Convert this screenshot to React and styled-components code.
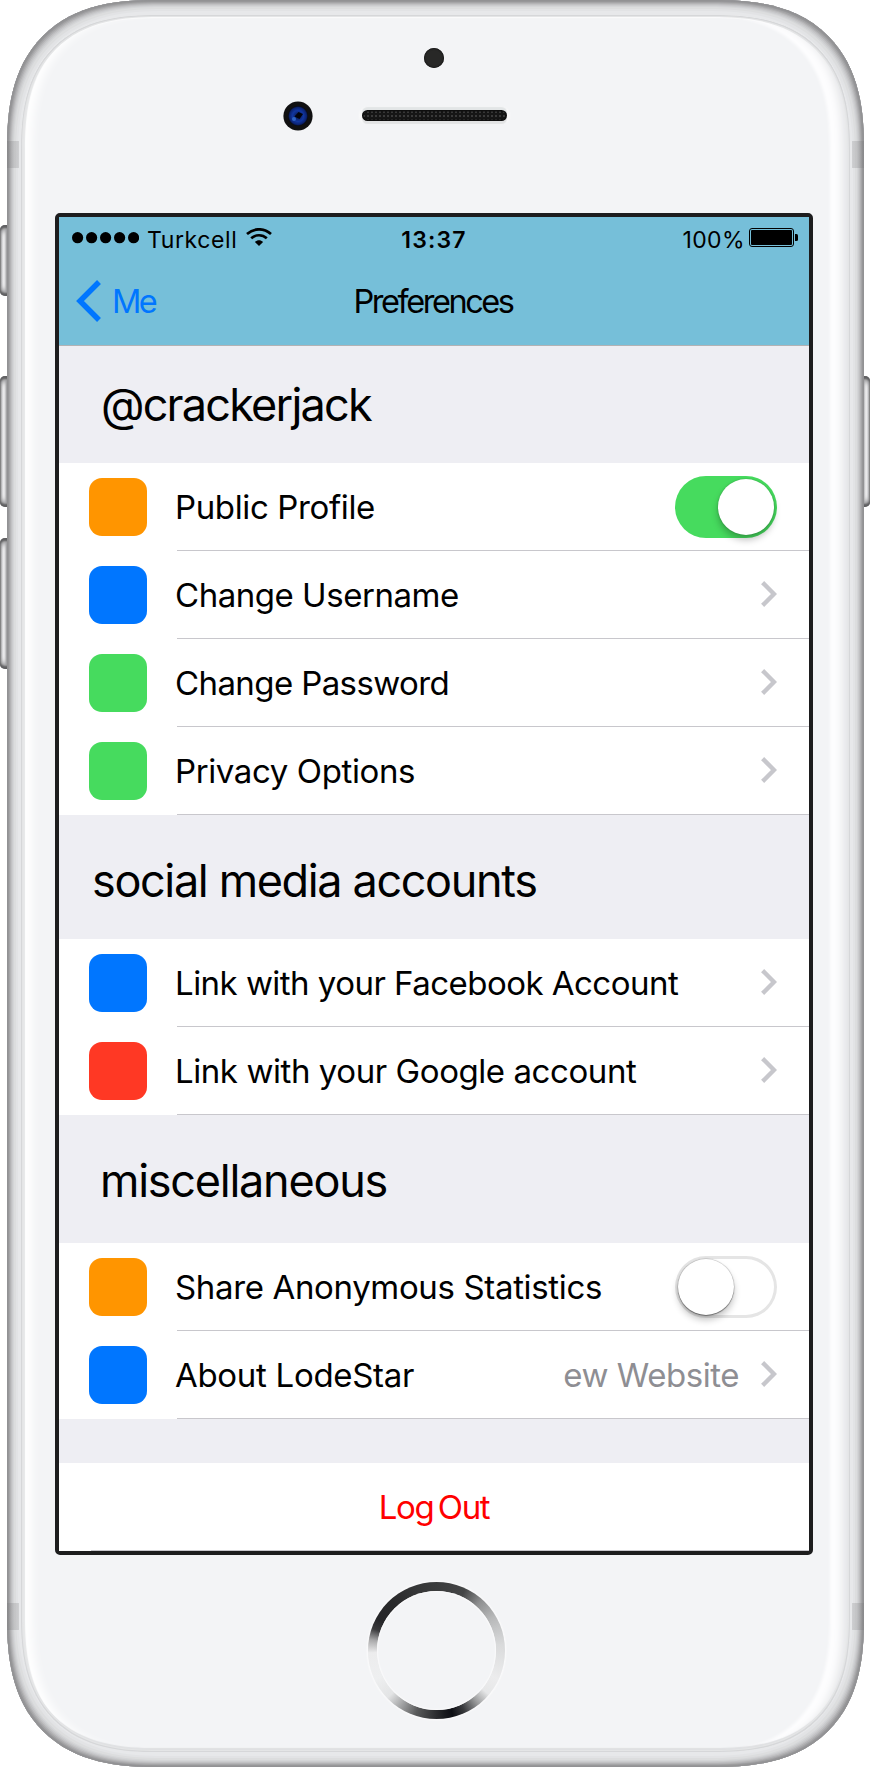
import React, { useState } from 'react';
import styled, { createGlobalStyle, css } from 'styled-components';

const GlobalStyle = createGlobalStyle`
  *, *::before, *::after { box-sizing: border-box; }
  html, body { margin: 0; padding: 0; background: #fff; }
  body { font-family: Inter, "Liberation Sans", sans-serif; color: #000; }
  button { font: inherit; color: inherit; border: 0; padding: 0; background: none; }
`;

/* ---------- Device ---------- */

const Device = styled.div`
  position: relative;
  width: 870px;
  height: 1767px;
  padding: 0 6px 0 7px;
  overflow: hidden;
`;

const SideButton = styled.span`
  position: absolute;
  top: ${(p) => p.$top}px;
  ${(p) => p.$side}: 0;
  width: 12px;
  height: ${(p) => p.$length}px;
  border-radius: 5px;
  background: linear-gradient(
    ${(p) => (p.$side === 'left' ? 'to right' : 'to left')},
    #8e8e90 0, #bcbcbe 1px, #e6e6e8 3px, #f0f0f1 4px, #b9b9bb 6px, #6a6a6c 8px
  );
  box-shadow: inset 0 3px 2px #5f5f61, inset 0 -3px 2px #5f5f61,
    inset 0 8px 5px -2px #a2a2a4, inset 0 -8px 5px -2px #a2a2a4;
`;

const Shell = styled.div`
  position: relative;
  height: 1767px;
  padding: 15px 14px;
  border-radius: 128px;
  background: #e7e8ea;
  box-shadow: inset 0 0 0 1px #929294, inset 0 0 0 2px #979799, inset 0 0 0 3px #a5a5a7,
    inset 0 0 0 4px #b3b3b5, inset 0 0 0 5px #c1c1c3, inset 0 0 0 6px #cbccce,
    inset 0 0 0 7px #d4d5d7, inset 0 0 0 9px #dcddde, inset 0 0 0 11px #e2e3e5;
  @supports (corner-shape: superellipse(1.3)) {
    border-radius: 150px;
    corner-shape: superellipse(1.34);
  }
`;

const AntennaBand = styled.span`
  position: absolute;
  top: ${(p) => p.$top}px;
  ${(p) => p.$side}: 0;
  width: 12px;
  height: 27px;
  background: linear-gradient(
    ${(p) => (p.$side === 'left' ? 'to right' : 'to left')},
    rgba(120, 120, 122, 0.3), rgba(150, 150, 152, 0.3)
  );
`;

const Face = styled.div`
  display: flex;
  flex-direction: column;
  height: 1737px;
  border-radius: 116px;
  background: #f3f4f6;
  box-shadow: inset 0 0 0 1px #d6d7d9, inset 0 0 0 2px #e4e5e6,
    inset 0 -4px 1px #dfe0e2,
    inset 5px 0 1px -1px #e6e7e8, inset 14px 0 10px -3px #ffffff,
    inset -13px 0 10px -6px #e2e3e5, inset -21px 0 3px -1px #fdfdfe,
    inset 0 3px 1px #fbfbfc;
  @supports (corner-shape: superellipse(1.3)) {
    border-radius: 136px;
    corner-shape: superellipse(1.34);
  }
`;

const SensorArea = styled.div`
  height: 198px;
  padding-top: 33px;
`;

const Proximity = styled.div`
  width: 20px;
  height: 20px;
  margin-left: 403px;
  border-radius: 50%;
  background: #282827;
  box-shadow: inset 0 0 1px 1px #1c1c1c;
`;

const SensorRow = styled.div`
  display: flex;
  height: 30px;
  margin: 33px 0 0 262px;
`;

const Camera = styled.svg`
  display: block;
  width: 30px;
  height: 30px;
`;

const Speaker = styled.div`
  width: 145px;
  height: 11px;
  margin: 9px 0 0 49px;
  border-radius: 6px;
  background: radial-gradient(circle, #3a3a3a 0.8px, transparent 1.1px) 0 0 / 4px 4px, #161616;
  box-shadow: inset 0 0 1px 1.5px #0e0e0e, 0 -3px 1px #e2e5e6, 0 3px 1px #e2e3e4, 0 0 2px 3px #fafafa;
`;

const HomeButton = styled.button`
  width: 137px;
  height: 137px;
  margin: 27px 0 0 347px;
  padding: 9px;
  border-radius: 50%;
  background: conic-gradient(
    #3b3c3d 0deg, #444546 25deg, #8f9091 42deg, #b8b9ba 60deg, #d9dadb 85deg, #ececed 115deg,
    #e6e7e8 130deg, #9b9c9d 142deg, #3a3b3e 155deg, #0d0e14 166deg, #1a1b1f 173deg,
    #303133 182deg, #595a5b 198deg, #a9aaab 214deg, #e3e4e5 226deg, #eeeff0 245deg,
    #ececed 268deg, #aaaaab 279deg, #3a3a3c 289deg, #262629 298deg, #29292b 318deg, #353637 340deg,
    #3b3c3d 360deg
  );
  box-shadow: 0 0 1px 1.5px #f9f9fa;
  &::before {
    content: '';
    display: block;
    height: 100%;
    border-radius: 50%;
    background: #f3f4f6;
    box-shadow: inset 0 0 1px 1px #fafafb;
  }
`;

/* ---------- Screen ---------- */

const Screen = styled.main`
  display: flex;
  flex-direction: column;
  width: 758px;
  height: 1342px;
  margin-left: 34px;
  border: 4px solid #1d1d1e;
  border-radius: 5px;
  background: #eeeef3;
`;

const TopBar = styled.header`
  height: 129px;
  background: #76bfd9;
  border-bottom: 1px solid #b2b2b4;
`;

const StatusBar = styled.div`
  display: grid;
  grid-template-columns: 1fr auto 1fr;
  height: 40px;
  padding: 9px 11px 0 13px;
  font-size: 23px;
  line-height: 28px;
`;

const StatusGroup = styled.div`
  display: flex;
  justify-content: ${(p) => (p.$end ? 'flex-end' : 'flex-start')};
  letter-spacing: ${(p) => (p.$end ? 0.4 : 0.6)}px;
`;

const Clock = styled.time`
  margin-right: 2px;
  font-weight: 600;
  letter-spacing: 1.15px;
`;

const SignalDots = styled.svg`
  width: 67px;
  height: 12px;
  margin: 6px 8px 0 0;
`;

const WifiIcon = styled.svg`
  width: 26px;
  height: 18px;
  margin: 2px 0 0 9px;
`;

const BatteryIcon = styled.svg`
  width: 49px;
  height: 19px;
  margin: 2px 0 0 4px;
`;

const NavBar = styled.nav`
  display: flex;
  height: 88px;
  line-height: 90px;
  font-size: 32.5px;
`;

const NavSide = styled.div`
  flex: 1;
  display: flex;
`;

const BackButton = styled.button`
  display: flex;
  padding-left: 17px;
  color: #0076ff;
  line-height: 90px;
  letter-spacing: -2.6px;
  svg { width: 26px; height: 42px; margin: 23px 10px 0 0; }
`;

const Title = styled.h1`
  margin: 0 2px 0 0;
  font-size: inherit;
  font-weight: 400;
  letter-spacing: -2.46px;
`;

const SectionHeading = styled.h2`
  height: ${(p) => p.$height}px;
  margin: 0;
  padding: ${(p) => p.$height > 120 ? 38 : 31}px 0 0 ${(p) => p.$indent}px;
  font-size: 45px;
  font-weight: 400;
  line-height: 55px;
  letter-spacing: ${(p) => p.$tracking}px;
`;

const List = styled.ul`
  margin: 0;
  padding: 0;
  list-style: none;
  background: #fff;
`;

const Row = styled.li`
  display: flex;
  height: 88px;
  padding-left: 30px;
`;

const Swatch = styled.span`
  width: 58px;
  height: 58px;
  margin: 15px 30px 0 0;
  border-radius: 13px;
  background: ${(p) => p.$color};
`;

const RowBody = styled.div`
  flex: 1;
  display: flex;
  padding-right: 32px;
  font-size: 33px;
  line-height: 88px;
  white-space: nowrap;
  box-shadow: inset 0 -1px 0 #c8c7cc;
`;

const RowLabel = styled.span`
  flex: 1;
  margin-left: -2px;
  letter-spacing: ${(p) => p.$tracking}px;
`;

const Detail = styled.span`
  margin-right: 22px;
  color: #8e8e93;
  letter-spacing: -0.46px;
`;

const Chevron = styled.svg`
  width: 16px;
  height: 28px;
  margin-top: 29px;
`;

const SwitchTrack = styled.button`
  width: 102px;
  height: 62px;
  margin-top: 13px;
  padding: 3px;
  border-radius: 31px;
  ${(p) => p.$on
    ? css`background: #46db5e; padding-left: 43px;`
    : css`background: #fff; box-shadow: inset 0 0 0 3px #e5e5e5;`}
  &::before {
    content: '';
    display: block;
    width: 56px;
    height: 56px;
    border-radius: 50%;
    background: #fff;
    box-shadow: ${(p) => p.$on
      ? '0 0 2px rgba(0,0,0,.25), 0 5px 7px rgba(0,0,0,.25)'
      : '0 0 1px 0.5px rgba(0,0,0,.22), 0 1px 1px rgba(0,0,0,.35), 0 5px 7px rgba(0,0,0,.24)'};
  }
`;

const LogOut = styled.button`
  height: 88px;
  margin-top: 44px;
  background: linear-gradient(#c8c7cc, #c8c7cc) 32px 100% / 100% 1px no-repeat, #fff;
  color: #f00;
  font-size: 33px;
  line-height: 88px;
  letter-spacing: -1.4px;
  word-spacing: -3.4px;
  text-align: center;
`;

const ORANGE = '#ff9500';
const BLUE = '#0076ff';
const GREEN = '#46db5e';
const RED = '#ff3824';

const SECTIONS = [
  {
    title: '@crackerjack', height: 117, indent: 42, tracking: -1.78,
    rows: [
      { label: 'Public Profile', color: ORANGE, tracking: -0.37, toggle: true, initial: true },
      { label: 'Change Username', color: BLUE, tracking: -0.47 },
      { label: 'Change Password', color: GREEN, tracking: -0.6 },
      { label: 'Privacy Options', color: GREEN, tracking: -0.39 },
    ],
  },
  {
    title: 'social media accounts', height: 124, indent: 33, tracking: -1.36,
    rows: [
      { label: 'Link with your Facebook Account', color: BLUE, tracking: -0.53 },
      { label: 'Link with your Google account', color: RED, tracking: -0.43 },
    ],
  },
  {
    title: 'miscellaneous', height: 128, indent: 41, tracking: -1.25,
    rows: [
      { label: 'Share Anonymous Statistics', color: ORANGE, tracking: -0.35, toggle: true, initial: false },
      { label: 'About LodeStar', color: BLUE, tracking: -0.3, detail: 'ew Website' },
    ],
  },
];

function Switch({ initial, label }) {
  const [on, setOn] = useState(initial);
  return <SwitchTrack $on={on} role="switch" aria-checked={on} aria-label={label} onClick={() => setOn(!on)} />;
}

function PreferenceRow({ label, color, tracking, toggle, initial, detail }) {
  return (
    <Row>
      <Swatch $color={color} />
      <RowBody>
        <RowLabel $tracking={tracking}>{label}</RowLabel>
        {detail && <Detail>{detail}</Detail>}
        {toggle ? (
          <Switch initial={initial} label={label} />
        ) : (
          <Chevron viewBox="0 0 16 28" fill="none" stroke="#c7c7cc" strokeWidth="4.4">
            <path d="M1.6 2.6 13 14 1.6 25.4" />
          </Chevron>
        )}
      </RowBody>
    </Row>
  );
}

function StatusLine() {
  return (
    <StatusBar>
      <StatusGroup>
        <SignalDots viewBox="0 0 67 12">
          {[0, 1, 2, 3, 4].map((i) => <circle key={i} cx={5.6 + i * 14} cy="5.7" r="5.6" />)}
        </SignalDots>
        <span>Turkcell</span>
        <WifiIcon viewBox="0 0 26 18" fill="none" stroke="#000" strokeWidth="2.7">
          <path d="M1 6.1C8 -.3 18 -.3 25 6.1" />
          <path d="M5.2 10.3C9.7 6.2 16.3 6.2 20.8 10.3" />
          <path d="M13 18 8.9 13.9C11.3 11.7 14.7 11.7 17.1 13.9Z" fill="#000" stroke="none" />
        </WifiIcon>
      </StatusGroup>
      <Clock>13:37</Clock>
      <StatusGroup $end>
        <span>100%</span>
        <BatteryIcon viewBox="0 0 49 19">
          <rect x=".5" y=".5" width="44" height="18" rx="2.5" fill="none" stroke="#000" />
          <rect x="2" y="2" width="41" height="15" rx="1" />
          <path d="M46 6h1.5q1.5 0 1.5 1.5v4q0 1.5-1.5 1.5H46z" />
        </BatteryIcon>
      </StatusGroup>
    </StatusBar>
  );
}

export default function App() {
  return (
    <>
      <GlobalStyle />
      <Device>
        <SideButton $side="left" $top={225} $length={71} />
        <SideButton $side="left" $top={376} $length={131} />
        <SideButton $side="left" $top={538} $length={131} />
        <SideButton $side="right" $top={376} $length={131} />
        <Shell>
          <AntennaBand $side="left" $top={141} />
          <AntennaBand $side="right" $top={141} />
          <AntennaBand $side="left" $top={1603} />
          <AntennaBand $side="right" $top={1603} />
          <Face>
            <SensorArea>
              <Proximity />
              <SensorRow>
                <Camera viewBox="0 0 30 30">
                  <defs>
                    <radialGradient id="lens">
                      <stop offset="0" stopColor="#0a1440" />
                      <stop offset=".55" stopColor="#1136a0" />
                      <stop offset=".85" stopColor="#0b2270" />
                      <stop offset="1" stopColor="#05070f" />
                    </radialGradient>
                  </defs>
                  <circle cx="15" cy="15" r="14.6" fill="#101011" />
                  <circle cx="15" cy="15" r="10" fill="url(#lens)" />
                  <path d="M11.5 15.5 15.5 11l4.500 2-3.500 5z" fill="#02030c" />
                  <circle cx="11" cy="18" r="2" fill="#2c62c4" />
                </Camera>
                <Speaker />
              </SensorRow>
            </SensorArea>
            <Screen>
              <TopBar>
                <StatusLine />
                <NavBar>
                  <NavSide>
                    <BackButton>
                      <svg viewBox="0 0 26 42" fill="none" stroke="#0076ff" strokeWidth="5.5">
                        <path d="M23 2 4 21 23 40" />
                      </svg>
                      Me
                    </BackButton>
                  </NavSide>
                  <Title>Preferences</Title>
                  <NavSide />
                </NavBar>
              </TopBar>
              {SECTIONS.map((s) => (
                <React.Fragment key={s.title}>
                  <SectionHeading $height={s.height} $indent={s.indent} $tracking={s.tracking}>
                    {s.title}
                  </SectionHeading>
                  <List>
                    {s.rows.map((r) => <PreferenceRow key={r.label} {...r} />)}
                  </List>
                </React.Fragment>
              ))}
              <LogOut>Log Out</LogOut>
            </Screen>
            <HomeButton aria-label="Home" />
          </Face>
        </Shell>
      </Device>
    </>
  );
}
